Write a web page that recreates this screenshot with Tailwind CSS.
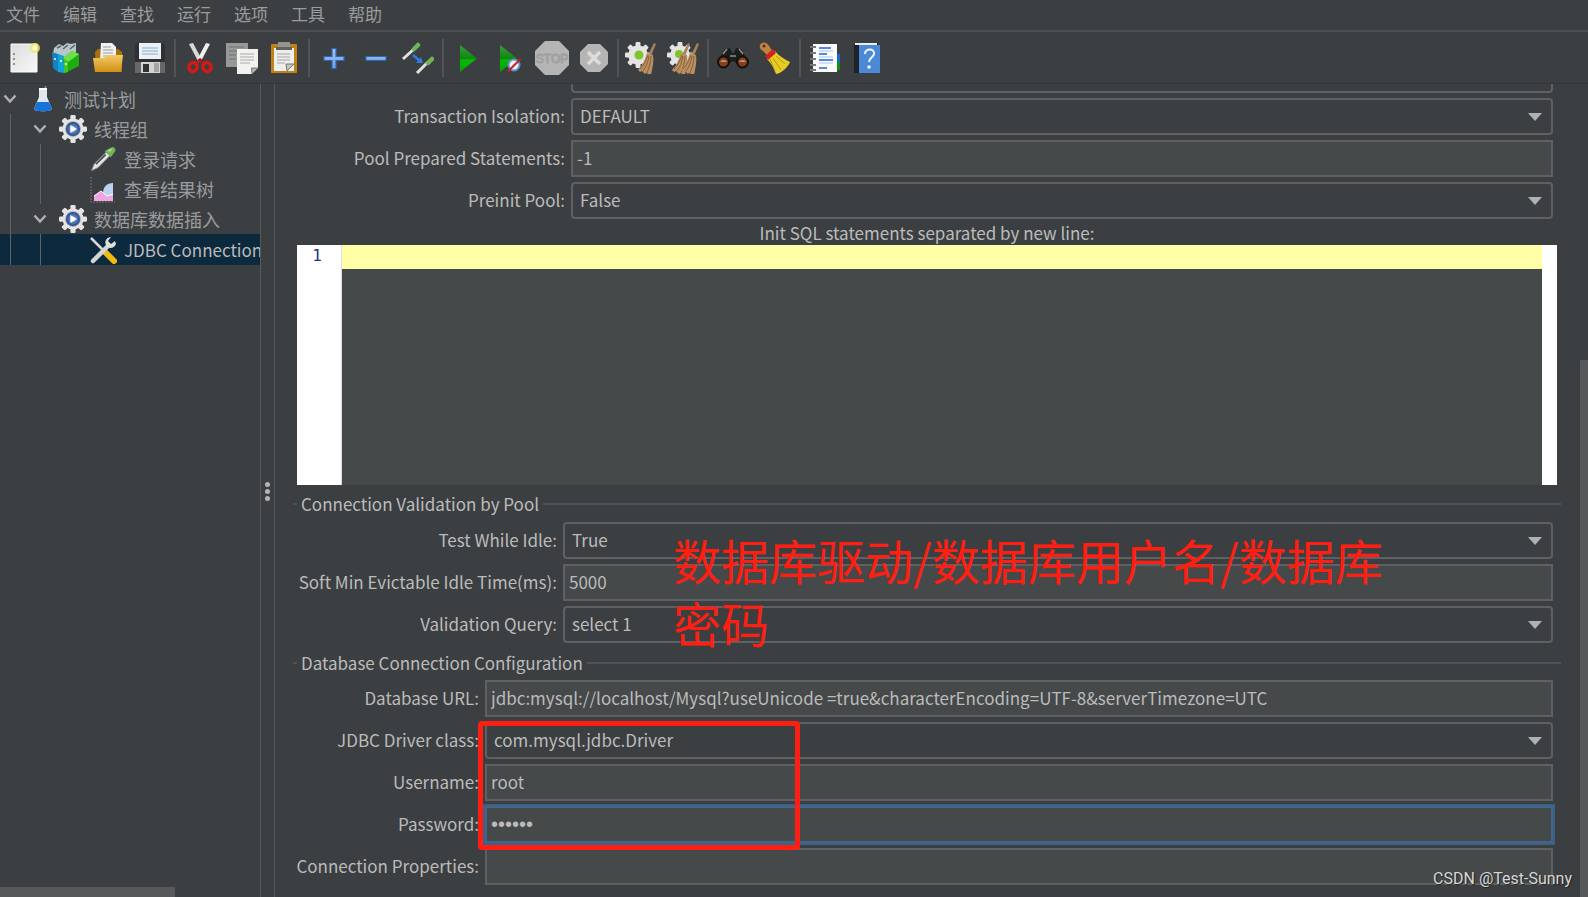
<!DOCTYPE html>
<html lang="zh-CN">
<head>
<meta charset="utf-8">
<title>Apache JMeter</title>
<script src="https://cdn.jsdelivr.net/npm/@tailwindcss/browser@4"></script>
</head>
<body class="flex h-screen flex-col overflow-hidden bg-[#3c3f41] font-['Noto_Sans_CJK_SC',sans-serif] text-[17px] leading-[24px] text-[#bbbbbb]">
<svg class="absolute size-0" aria-hidden="true">
  <defs>
    <linearGradient id="paper" x1="0" y1="0" x2="1" y2="1"><stop offset="0" stop-color="#dcdcdc"/><stop offset="1" stop-color="#f8f8f8"/></linearGradient>
    <linearGradient id="green" x1="0" y1="0" x2="0" y2="1"><stop offset="0" stop-color="#3f9a3f"/><stop offset=".5" stop-color="#0c8a0c"/><stop offset=".55" stop-color="#08b808"/><stop offset="1" stop-color="#07a007"/></linearGradient>
    <linearGradient id="gold" x1="0" y1="0" x2="0" y2="1"><stop offset="0" stop-color="#f3cb66"/><stop offset="1" stop-color="#cf8f14"/></linearGradient>
    <linearGradient id="blue" x1="0" y1="0" x2="0" y2="1"><stop offset="0" stop-color="#9cc4f4"/><stop offset="1" stop-color="#6ba2e6"/></linearGradient>
    <radialGradient id="hub"><stop offset="0" stop-color="#9db6de"/><stop offset="1" stop-color="#1d4590"/></radialGradient>
    <symbol id="cog" viewBox="0 0 32 32">
      <g fill="#e4e4e4"><circle cx="16" cy="16" r="12"/>
      <g id="teeth"><rect x="13" y="0" width="6" height="32" rx="1.5"/><rect x="0" y="13" width="32" height="6" rx="1.5"/></g>
      <use href="#teeth" transform="rotate(45 16 16)"/></g>
    </symbol>
    <symbol id="gear" viewBox="0 0 32 32">
      <use href="#cog"/><circle cx="16" cy="16" r="9" fill="#a4a8ae"/><circle cx="16" cy="16" r="8" fill="url(#hub)"/><path d="M13 11.500l7.500 4.500-7.500 4.500z" fill="#fff"/>
    </symbol>
    <symbol id="broom" viewBox="0 0 32 32">
      <path d="M29 1l2 1-5 12-3-1z" fill="#a8805a"/>
      <path d="M22 11l6 2c1 6-.5 13-2 20l-5-2-1 1-3-3-2 1-2-2c4-4 7-10 9-17z" fill="#b98f62"/>
      <path d="M24 14c-1 6-3 11-6 15M26 14c0 6-2 12-4 17M23 13c-2 6-5 11-8 14" stroke="#8b633c" fill="none"/>
    </symbol>
    <symbol id="dropper" viewBox="0 0 32 32">
      <path d="M3 29l3-7L20 8l4 4L10 26z" fill="#e6e6e6" stroke="#999"/>
      <path d="M8 22L19 11" stroke="#4c4c4c" stroke-width="2"/>
      <path d="M18 7l7 7 2-3 3-4c1-3-2-6-5-4l-4 2z" fill="#6fb558"/><path d="M22 7l4-2" stroke="#a9dc95" stroke-width="2"/>
    </symbol>
    <symbol id="chev" viewBox="0 0 14 10"><path d="M1.500 1.500L7 7.500l5.500-6" fill="none" stroke="#afb1b3" stroke-width="2.500"/></symbol>
    <symbol id="caret" viewBox="0 0 14 8"><path d="M0 0h14L7 8z" fill="#afb1b3"/></symbol>
  </defs>
</svg>

<nav aria-label="菜单" class="flex h-[32px] shrink-0 items-center gap-[23px] border-b-2 border-[#4c4e4f] pb-[2px] pl-[6px] text-[#9a9c9d]">
  <button>文件</button><button>编辑</button><button>查找</button><button>运行</button><button>选项</button><button>工具</button><button>帮助</button>
</nav>

<div role="toolbar" aria-label="工具栏" class="flex h-[52px] shrink-0 items-center border-b border-[#333638] pl-[3px]">
  <button aria-label="新建" class="flex w-[42px] justify-center"><svg class="size-[32px]" viewBox="0 0 32 32"><path d="M3 2h26v28H3z" fill="url(#paper)" stroke="#fff"/><path d="M5 12h2M5 17h2M5 22h2" stroke="#777" stroke-width="1.500"/><circle cx="27" cy="6" r="5" fill="#f4e65a" opacity=".8"/><circle cx="27" cy="6" r="2.500" fill="#fffde0"/></svg></button>
  <button aria-label="模板" class="flex w-[42px] justify-center"><svg class="size-[32px]" viewBox="0 0 32 32"><path d="M4 6l5-4 4 2 4-3 4 1 5-1v14l-12 5L3 12z" fill="#b9c7cc"/><path d="M7 6l4-2M13 7l5-4M20 7l5-4" stroke="#4e656c" stroke-width="1.500"/><path d="M2 10l6 2v18l-5-4z" fill="#1581c4"/><path d="M8 12l6 2v17l-6-1z" fill="#0fa6d6"/><path d="M13 16l9-7 7 3v12l-14 7z" fill="#1fae12"/><path d="M13 16l9-7 7 3-11 8z" fill="#6fe04a"/><path d="M14 17l4 3v10l-4 1z" fill="#3dc722"/><circle cx="5" cy="17" r="1" fill="#fff"/><circle cx="11" cy="19" r="1" fill="#fff"/><circle cx="16" cy="22" r="1" fill="#fff"/></svg></button>
  <button aria-label="打开" class="flex w-[42px] justify-center"><svg class="size-[32px]" viewBox="0 0 32 32"><path d="M3 10l3-3h20l4 3v20H4z" fill="#a9700d"/><path d="M9 1h11l4 4v14H8z" fill="#f2f2f2"/><path d="M11 5h8M11 8h10M11 11h10M11 14h10" stroke="#999"/><path d="M1 16h11l3-3h16l-2 17H3z" fill="url(#gold)"/></svg></button>
  <button aria-label="保存" class="flex w-[42px] justify-center"><svg class="size-[32px]" viewBox="0 0 32 32"><path d="M1 3l2-2h26l2 2v28H1z" fill="#303032"/><path d="M1 20h30v11H1z" fill="#68686a"/><path d="M5 1h22v16H5z" fill="#e9f0f6"/><path d="M8 6h16M8 9h16M8 12h16" stroke="#8bacc9"/><path d="M7 20h19v11H7z" fill="#d4d4d4"/><path d="M9 22h6v8H9z" fill="#333"/><path d="M20 21h5v9h-5z" fill="#a4a4a4"/></svg></button>
  <span class="mx-[3px] h-[38px] w-[2px] bg-[#515456]"></span>
  <button aria-label="剪切" class="flex w-[42px] justify-center"><svg class="size-[32px]" viewBox="0 0 32 32"><path d="M5 2l4-1 9 17-3 3z" fill="#d9d9d9"/><path d="M26 2l-4-1-9 17 3 3z" fill="#efefef"/><path d="M13 18l3-2 3 2-3 4z" fill="#b91212"/><ellipse cx="9" cy="25" rx="4" ry="4.500" fill="none" stroke="#d41717" stroke-width="3.500" transform="rotate(25 9 25)"/><ellipse cx="23" cy="25" rx="4" ry="4.500" fill="none" stroke="#d41717" stroke-width="3.500" transform="rotate(-25 23 25)"/></svg></button>
  <button aria-label="复制" class="flex w-[42px] justify-center"><svg class="size-[32px]" viewBox="0 0 32 32"><path d="M0 1h22v24H0z" fill="#979998"/><path d="M3 5h15M3 9h10M3 13h7M3 17h7" stroke="#707272"/><path d="M11 7h21v19l-6 6H11z" fill="#f2f2ef"/><path d="M14 12h14M14 15h14M14 18h14M14 21h10" stroke="#a8a8a8"/><path d="M32 26l-6 6-.500-6z" fill="#b4b4b0" stroke="#777"/></svg></button>
  <button aria-label="粘贴" class="flex w-[42px] justify-center"><svg class="size-[32px]" viewBox="0 0 32 32"><rect x="3" y="2" width="26" height="29" rx="1" fill="#bf8219"/><path d="M6 6h20v23H6z" fill="#eeeeec"/><path d="M10 0h12v7H10z" fill="#94958d"/><path d="M8 5h16v3H8z" fill="#62635c"/><path d="M9 12h13M9 15h13M9 18h13M9 21h8" stroke="#a4a4a4"/><path d="M26 22l-7 7-1-7z" fill="#c4c4c0" stroke="#777"/></svg></button>
  <span class="mx-[3px] h-[38px] w-[2px] bg-[#515456]"></span>
  <button aria-label="展开" class="flex w-[42px] justify-center"><svg class="size-[32px]" viewBox="0 0 32 32"><path d="M14 6.500h4v8h8v4h-8v8h-4v-8H6v-4h8z" fill="url(#blue)" stroke="#3465b4" stroke-width="1.200"/></svg></button>
  <button aria-label="折叠" class="flex w-[42px] justify-center"><svg class="size-[32px]" viewBox="0 0 32 32"><path d="M6 14.500h20v4H6z" fill="url(#blue)" stroke="#3465b4" stroke-width="1.200"/></svg></button>
  <button aria-label="切换" class="flex w-[42px] justify-center"><svg class="size-[32px]" viewBox="0 0 32 32"><path d="M1 17L12 7M15 31l11-11" stroke="#e0e0e0" stroke-width="3"/><path d="M12 7l4-4M26 21l4-4" stroke="#6fb558" stroke-width="4.500" stroke-linecap="round"/><path d="M11 13l7 6" stroke="#2f7de0" stroke-width="2.500"/><path d="M21 21h-7l5-6z" fill="#2f7de0"/></svg></button>
  <span class="mx-[3px] h-[38px] w-[2px] bg-[#515456]"></span>
  <button aria-label="启动" class="flex w-[42px] justify-center"><svg class="size-[32px]" viewBox="0 0 32 32"><path d="M8 3l17 13.500L8 30z" fill="url(#green)"/></svg></button>
  <button aria-label="不停顿开始" class="flex w-[42px] justify-center"><svg class="size-[32px]" viewBox="0 0 32 32"><path d="M6 3l17 13.500L6 30z" fill="url(#green)"/><circle cx="20" cy="23" r="5.500" fill="#eef2f8" stroke="#5c8fd0" stroke-width="2"/><path d="M14 29.500L26.500 17" stroke="#c8201c" stroke-width="2"/></svg></button>
  <button aria-label="停止" class="flex w-[42px] justify-center"><svg class="size-[34px]" viewBox="0 0 34 34"><path d="M10 0h14l10 10v14L24 34H10L0 24V10z" fill="#b5b5b5"/><text x="17" y="22" text-anchor="middle" font-family="Liberation Sans" font-size="12" fill="#b0b0b0" stroke="#a0a0a0">STOP</text></svg></button>
  <button aria-label="关闭" class="flex w-[42px] justify-center"><svg class="size-[28px]" viewBox="0 0 28 28"><path d="M8 0h12l8 8v12l-8 8H8l-8-8V8z" fill="#b5b5b5"/><path d="M8 8l12 12M20 8L8 20" stroke="#dcdcdc" stroke-width="3.500"/></svg></button>
  <span class="mr-[1px] ml-[2px] h-[38px] w-[2px] bg-[#515456]"></span>
  <button aria-label="清除" class="flex w-[42px] justify-center"><svg class="size-[32px]" viewBox="0 0 32 32"><use href="#cog" width="26" height="26"/><circle cx="14" cy="13" r="4.500" fill="#7cc52c"/><use href="#broom"/></svg></button>
  <button aria-label="清除全部" class="flex w-[42px] justify-center"><svg class="size-[32px]" viewBox="0 0 32 32"><use href="#cog" width="26" height="26"/><circle cx="12" cy="12" r="4" fill="#7cc52c"/><use href="#broom" x="-8"/><use href="#broom" x="1"/></svg></button>
  <span class="mx-[3px] h-[38px] w-[2px] bg-[#515456]"></span>
  <button aria-label="查找" class="flex w-[42px] justify-center"><svg class="size-[32px]" viewBox="0 0 32 32"><path d="M2 17l6-10 5-1 2 5h2l2-5 5 1 6 10-4 8-10-6-10 6z" fill="#1d1d1d"/><path d="M6 12l4-5M26 12l-4-5M13 14h6" stroke="#8c8c8c" stroke-width="1.500"/><circle cx="6.500" cy="20" r="5.500" fill="#873f18" stroke="#101010" stroke-width="2"/><circle cx="25.500" cy="20" r="5.500" fill="#873f18" stroke="#101010" stroke-width="2"/><path d="M3 20a4 4 0 0 1 7 0M22 20a4 4 0 0 1 7 0" fill="#cfcfcf" opacity=".6"/></svg></button>
  <button aria-label="重置查找" class="flex w-[42px] justify-center"><svg class="size-[32px]" viewBox="0 0 32 32"><path d="M1 3c2-4 7-3 9 1l4 6-5 4-5-5C2 8 0 6 1 3z" fill="#bf8340"/><circle cx="5" cy="4" r="1.500" fill="#4d3218"/><path d="M16 9c4 5 9 8 15 11-2 5-8 11-14 12C15 26 12 21 8 17z" fill="#e8cc26"/><path d="M17 14l9 8M14 16l8 12M11 17l5 12" stroke="#b39a14"/><path d="M6 14l8-7 3 4-8 7z" fill="#cf2320"/></svg></button>
  <span class="mx-[3px] h-[38px] w-[2px] bg-[#515456]"></span>
  <button aria-label="函数助手" class="flex w-[42px] justify-center"><svg class="size-[32px]" viewBox="0 0 32 32"><path d="M27 12h4v8h-4z" fill="#1869ce"/><path d="M27 20h4v8h-4z" fill="#0c8f14"/><path d="M4 2h24v28H4z" fill="#fafafa"/><path d="M1 5h6M1 11h6M1 17h6M1 23h6M1 28h6" stroke="#777" stroke-width="2"/><path d="M10 6h12M10 12h8M10 18h14M10 26h8" stroke="#1c64d6" stroke-width="1.500"/><path d="M10 9h14M10 15h14M10 21h14" stroke="#a8c4ee"/></svg></button>
  <button aria-label="帮助" class="flex w-[42px] justify-center"><svg class="size-[32px]" viewBox="0 0 32 32"><path d="M3 3l3-2h21v2L8 31H3z" fill="#1c2227"/><path d="M4 1h22v2H4z" fill="#e9eef2"/><path d="M8 3h21v28H8z" fill="#4b88d6"/><path d="M14 12c0-6 10-6 9 0-1 4-5 4-5 8" fill="none" stroke="#f2f6fb" stroke-width="2"/><circle cx="18" cy="25" r="1.800" fill="#f2f6fb"/></svg></button>
</div>

<div class="flex min-h-0 flex-1">
  <aside class="flex w-[260px] shrink-0 flex-col justify-between overflow-hidden">
    <div role="tree" aria-label="测试计划" class="text-[18px] text-[#9a9c9d]">
      <div role="treeitem" class="flex h-[30px] items-center whitespace-nowrap">
        <button aria-label="折叠" class="flex w-[20px] shrink-0 justify-center"><svg class="h-[10px] w-[14px]"><use href="#chev"/></svg></button>
        <svg class="mr-[7px] ml-[9px] size-[28px] shrink-0" viewBox="0 0 28 28"><path d="M15 5l2-4" stroke="#8f8f8f" stroke-width="1.500"/><path d="M10 4h8v8l5 12c0 3-18 3-18 0l5-12z" fill="#dfe6ec"/><path d="M8 17h12l3 7c0 3-18 3-18 0z" fill="#1673dc"/><path d="M10 3h8v2h-8z" fill="#fff"/></svg>测试计划
      </div>
      <div role="treeitem" class="flex h-[30px] items-center whitespace-nowrap">
        <span class="w-[30px] shrink-0 self-stretch pl-[10px]"><i class="block h-full w-px bg-[#606264]"></i></span>
        <button aria-label="折叠" class="flex w-[20px] shrink-0 justify-center"><svg class="h-[10px] w-[14px]"><use href="#chev"/></svg></button>
        <svg class="mr-[7px] ml-[9px] size-[28px] shrink-0"><use href="#gear"/></svg>线程组
      </div>
      <div role="treeitem" class="flex h-[30px] items-center whitespace-nowrap">
        <span class="w-[30px] shrink-0 self-stretch pl-[10px]"><i class="block h-full w-px bg-[#606264]"></i></span>
        <span class="w-[50px] shrink-0 self-stretch pl-[10px]"><i class="block h-full w-px bg-[#606264]"></i></span>
        <svg class="mr-[7px] ml-[9px] size-[28px] shrink-0"><use href="#dropper"/></svg>登录请求
      </div>
      <div role="treeitem" class="flex h-[30px] items-center whitespace-nowrap">
        <span class="w-[30px] shrink-0 self-stretch pl-[10px]"><i class="block h-full w-px bg-[#606264]"></i></span>
        <span class="w-[50px] shrink-0 self-stretch pl-[10px]"><i class="block h-full w-px bg-[#606264]"></i></span>
        <svg class="mr-[7px] ml-[9px] size-[28px] shrink-0" viewBox="0 0 28 28"><path d="M2 2v25h24" fill="none" stroke="#777" stroke-dasharray="2 1"/><path d="M14 18c0-6 4-10 10-10v18h-4z" fill="#b8d0f2"/><path d="M5 26v-5l7-5 6 5 6-1v6z" fill="#f0a5e2"/><path d="M5 21l7-5 6 5 6-2" fill="none" stroke="#fff"/></svg>查看结果树
      </div>
      <div role="treeitem" class="flex h-[30px] items-center whitespace-nowrap">
        <span class="w-[30px] shrink-0 self-stretch pl-[10px]"><i class="block h-full w-px bg-[#606264]"></i></span>
        <button aria-label="折叠" class="flex w-[20px] shrink-0 justify-center"><svg class="h-[10px] w-[14px]"><use href="#chev"/></svg></button>
        <svg class="mr-[7px] ml-[9px] size-[28px] shrink-0"><use href="#gear"/></svg>数据库数据插入
      </div>
      <div role="treeitem" aria-selected="true" class="flex h-[31px] items-center bg-[#0d293e] text-[17px] whitespace-nowrap text-[#bbbbbb]">
        <span class="w-[30px] shrink-0 self-stretch pl-[10px]"><i class="block h-full w-px bg-[#606264]"></i></span>
        <span class="w-[50px] shrink-0 self-stretch pl-[10px]"><i class="block h-full w-px bg-[#606264]"></i></span>
        <svg class="mr-[7px] ml-[9px] size-[28px] shrink-0" viewBox="0 0 28 28"><path d="M2 2l12 12" stroke="#d8d8d8" stroke-width="2.500"/><path d="M15 15l10 10" stroke="#efba12" stroke-width="6" stroke-linecap="round"/><path d="M4 25L19 10" stroke="#d2d4d6" stroke-width="4.500" stroke-linecap="round"/><path d="M22 1c-4 0-7 4-5 8s8 4 10-1l-1-3-4 3-3-3z" fill="#dedede"/></svg>JDBC Connection
      </div>
    </div>
    <div class="h-[10px] w-[175px] bg-[#56585a]"></div>
  </aside>

  <div role="separator" class="flex w-[15px] shrink-0 flex-col items-center justify-center gap-[2px] border-x border-[#56585a] pt-[2px]">
    <i class="size-[5px] rounded-full bg-[#b4b4b4]"></i><i class="size-[5px] rounded-full bg-[#b4b4b4]"></i><i class="size-[5px] rounded-full bg-[#b4b4b4]"></i>
  </div>

  <main class="min-w-0 flex-1 overflow-hidden pr-[19px] pl-[18px]">
    <div class="ml-[278px] flex h-[9px] items-end overflow-hidden pr-[8px]">
      <div class="h-[37px] w-full shrink-0 rounded-[4px] border-2 border-[#5e6061]"></div>
    </div>
    <form class="mt-[5px] grid grid-cols-[272px_1fr] items-center gap-x-[6px] gap-y-[5px] pr-[8px]">
      <label for="iso" class="pb-[2px] text-right whitespace-nowrap">Transaction Isolation:</label>
      <div class="relative"><select id="iso" class="block h-[37px] w-full appearance-none rounded-[4px] border-2 border-[#5e6061] bg-[#3c3f41] pb-[2px] pl-[7px]"><option>DEFAULT</option></select><svg class="pointer-events-none absolute top-[15px] right-[11px] h-[8px] w-[14px]"><use href="#caret"/></svg></div>
      <label for="pps" class="pb-[2px] text-right whitespace-nowrap">Pool Prepared Statements:</label>
      <input id="pps" value="-1" class="h-[37px] w-full border-2 border-[#5e6061] bg-[#45494a] pb-[2px] pl-[4px]">
      <label for="pre" class="pb-[2px] text-right whitespace-nowrap">Preinit Pool:</label>
      <div class="relative"><select id="pre" class="block h-[37px] w-full appearance-none rounded-[4px] border-2 border-[#5e6061] bg-[#3c3f41] pb-[2px] pl-[7px]"><option>False</option></select><svg class="pointer-events-none absolute top-[15px] right-[11px] h-[8px] w-[14px]"><use href="#caret"/></svg></div>
    </form>

    <div class="px-[4px]">
      <label for="sql" class="block pt-[2px] text-center">Init SQL statements separated by new line:</label>
      <div class="flex h-[240px]">
        <div class="w-[45px] border-r border-[#ddd] bg-white pr-[19px] text-right font-['DejaVu_Sans_Mono',monospace] text-[16px] leading-[22px] text-[#26327f]">1</div>
        <textarea id="sql" class="min-w-0 flex-1 resize-none bg-[linear-gradient(#ffffa8_24px,#45494a_24px)]"></textarea>
        <div class="w-[15px] bg-white"></div>
      </div>
    </div>

    <section class="relative">
      <h2 class="flex h-[37px] items-center gap-[4px] before:h-[2px] before:w-[4px] before:bg-[#505354] after:h-[2px] after:flex-1 after:bg-[#505354]">Connection Validation by Pool</h2>
      <form class="grid grid-cols-[264px_1fr] items-center gap-x-[6px] gap-y-[5px] pr-[8px]">
        <label for="idle" class="pb-[2px] text-right whitespace-nowrap">Test While Idle:</label>
        <div class="relative"><select id="idle" class="block h-[37px] w-full appearance-none rounded-[4px] border-2 border-[#5e6061] bg-[#3c3f41] pb-[2px] pl-[7px]"><option>True</option></select><svg class="pointer-events-none absolute top-[15px] right-[11px] h-[8px] w-[14px]"><use href="#caret"/></svg></div>
        <label for="soft" class="pb-[2px] text-right whitespace-nowrap">Soft Min Evictable Idle Time(ms):</label>
        <input id="soft" value="5000" class="h-[37px] w-full border-2 border-[#5e6061] bg-[#45494a] pb-[2px] pl-[4px]">
        <label for="vq" class="pb-[2px] text-right whitespace-nowrap">Validation Query:</label>
        <div class="relative"><select id="vq" class="block h-[37px] w-full appearance-none rounded-[4px] border-2 border-[#5e6061] bg-[#3c3f41] pb-[2px] pl-[7px]"><option>select 1</option></select><svg class="pointer-events-none absolute top-[15px] right-[11px] h-[8px] w-[14px]"><use href="#caret"/></svg></div>
      </form>
      <p class="pointer-events-none absolute top-[43px] left-[380px] z-10 text-[48px] leading-[63px] whitespace-nowrap text-[#ff1f12]">数据库驱动/数据库用户名/数据库<br>密码</p>
    </section>

    <section>
      <h2 class="flex h-[37px] items-center gap-[4px] pt-[2px] before:h-[2px] before:w-[4px] before:bg-[#505354] after:h-[2px] after:flex-1 after:bg-[#505354]">Database Connection Configuration</h2>
      <form class="relative grid grid-cols-[186px_1fr] items-center gap-x-[6px] gap-y-[5px] pr-[8px]">
        <label for="url" class="pb-[2px] text-right whitespace-nowrap">Database URL:</label>
        <input id="url" value="jdbc:mysql://localhost/Mysql?useUnicode =true&amp;characterEncoding=UTF-8&amp;serverTimezone=UTC" class="h-[37px] w-full border-2 border-[#5e6061] bg-[#45494a] pb-[2px] pl-[4px]">
        <label for="drv" class="pb-[2px] text-right whitespace-nowrap">JDBC Driver class:</label>
        <div class="relative"><select id="drv" class="block h-[37px] w-full appearance-none rounded-[4px] border-2 border-[#5e6061] bg-[#3c3f41] pb-[2px] pl-[7px]"><option>com.mysql.jdbc.Driver</option></select><svg class="pointer-events-none absolute top-[15px] right-[11px] h-[8px] w-[14px]"><use href="#caret"/></svg></div>
        <label for="usr" class="pb-[2px] text-right whitespace-nowrap">Username:</label>
        <input id="usr" value="root" class="h-[37px] w-full border-2 border-[#5e6061] bg-[#45494a] pb-[2px] pl-[4px]">
        <label for="pwd" class="pb-[2px] text-right whitespace-nowrap">Password:</label>
        <input id="pwd" type="password" value="123456" class="h-[37px] w-full border-2 border-[#41658b] bg-[#45494a] pl-[4px] font-['Liberation_Sans',sans-serif] text-[20px] ring-2 ring-[#3d6185]">
        <label for="props" class="pb-[2px] text-right whitespace-nowrap">Connection Properties:</label>
        <input id="props" class="h-[37px] w-full border-2 border-[#5e6061] bg-[#45494a] pb-[2px] pl-[4px]">
        <div class="pointer-events-none absolute top-[41px] left-[185px] h-[129px] w-[322px] rounded-[4px] border-[5px] border-[#ff1f12]"></div>
      </form>
    </section>
  </main>

  <div class="flex w-[8px] shrink-0 flex-col justify-end"><div class="h-[66%] bg-[#56585a]"></div></div>
</div>
<div class="pointer-events-none absolute right-[16px] bottom-[7px] font-[Roboto,sans-serif] text-[16px] leading-[22px] text-[#d6d6d6] [text-shadow:1px_1px_1px_#222]">CSDN @Test-Sunny</div>
</body>
</html>
